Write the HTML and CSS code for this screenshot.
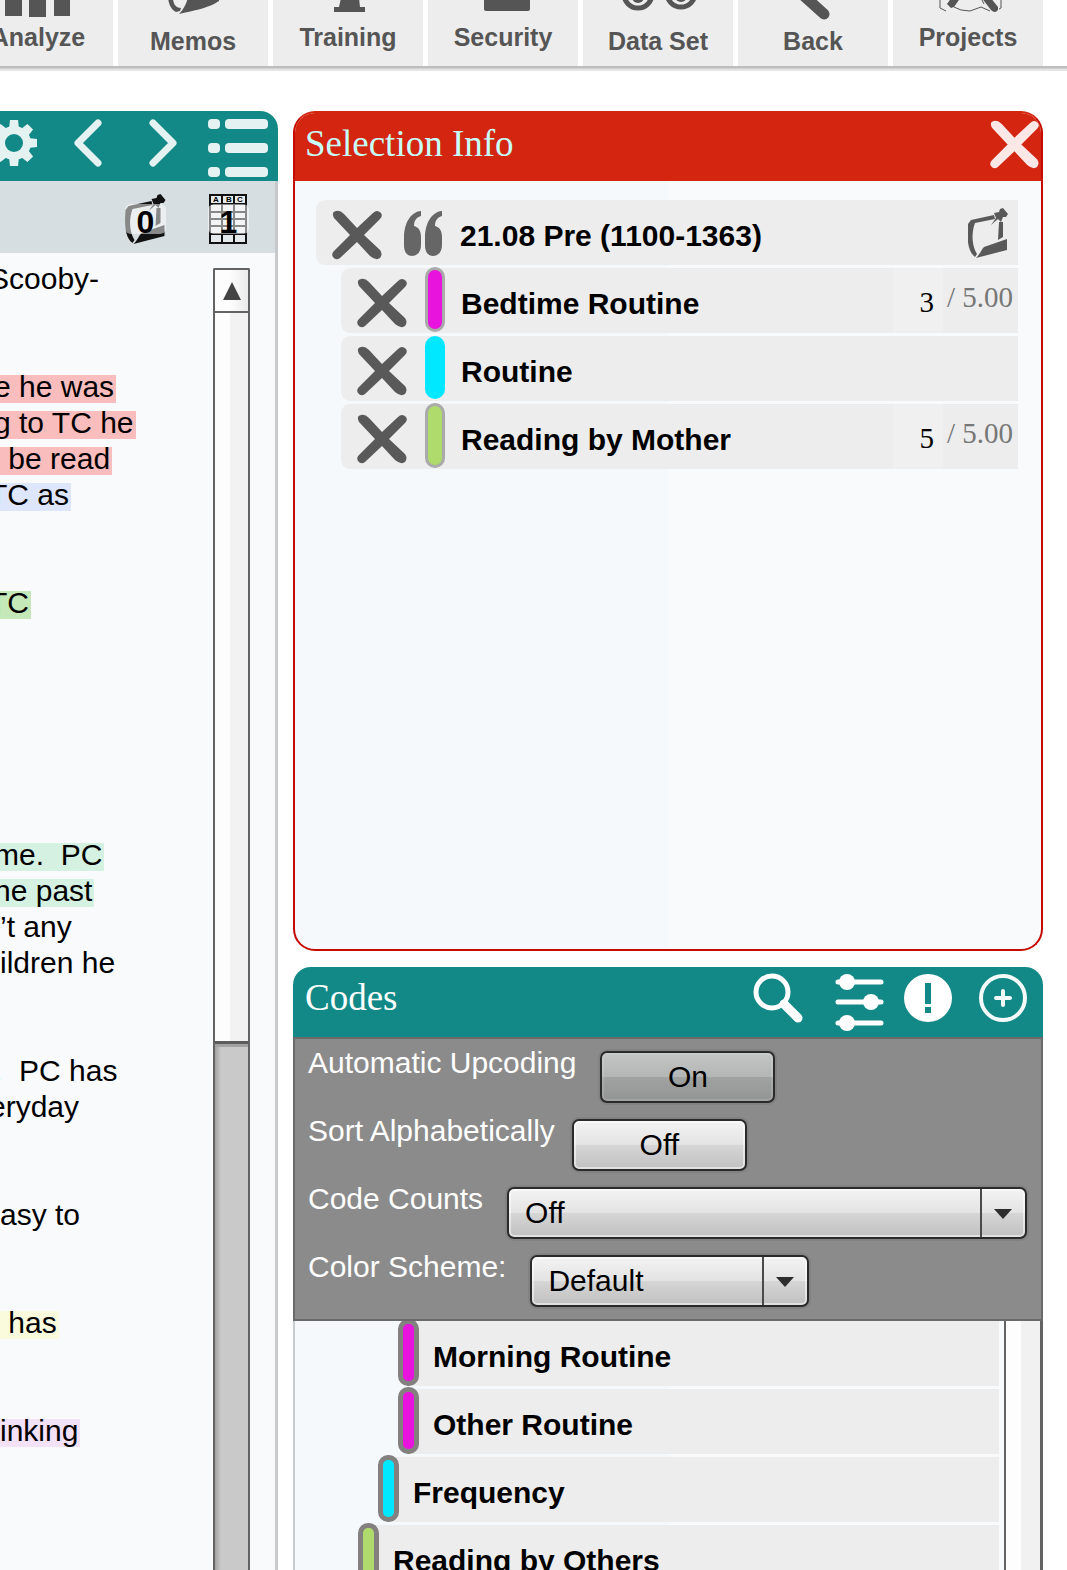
FILE: index.html
```html
<!DOCTYPE html>
<html lang="en">
<head>
<meta charset="utf-8">
<meta name="viewport" content="width=device-width, initial-scale=1">
<title>Selection Info</title>
<link rel="stylesheet" href="styles.css">
</head>
<body>
<svg class="symbols" aria-hidden="true">
  <symbol id="cross" viewBox="0 0 50 50"><path d="M2 8Q-1 2 4 1Q8 0 12 4L25 18L41 3Q45-1 49 3Q51 6 48 9L32 25L48 40Q51 44 48 48Q44 51 38 46L25 32L8 48Q4 51 1 47Q-1 44 2 41L18 25Z"/></symbol>
  <symbol id="memo" viewBox="0 0 40 50"><path d="M0 16L3 12L26 7L27 11L7 15L6 18C3 29 5 40 9 46L7 49C-1 43-1 29 0 16ZM31 14H35V29L30 32ZM8 50C13 45 13 42 16 39L39 31V42ZM26 5L31 4L32 1L35 0L40 6L38 9H35L33 14L30 11L23 17L28 10Z"/></symbol>
</svg>
<div class="app">
  <nav class="toolbar" aria-label="Main">
    <button class="tool"><svg class="tool-icon" viewBox="0 0 150 22"><path d="M42-4H59V16H42ZM66-4H83V17H66ZM91-4H107V16H91Z"/></svg>Analyze</button>
    <button class="tool"><svg class="tool-icon deep" viewBox="0 0 150 26"><path d="M50-2C51 6 54 10 58 12L62 11L63 8C58 8 55 4 55-2ZM70-2C68 4 66 9 61 14C75 11 88 8 96 4L101 1V-2Z"/></svg>Memos</button>
    <button class="tool"><svg class="tool-icon" viewBox="0 0 150 22"><path d="M68-2H86L87 7H92V12H61V7H66Z"/></svg>Training</button>
    <button class="tool"><svg class="tool-icon" viewBox="0 0 150 22"><path d="M56-2H102V9Q102 11 100 11H58Q56 11 56 9Z"/></svg>Security</button>
    <button class="tool"><svg class="tool-icon deep" viewBox="0 0 150 26"><g class="lines"><circle cx="55" cy="-6" r="14"/><circle cx="98" cy="-7" r="14"/></g><circle cx="55" cy="-3" r="6"/><circle cx="98" cy="-4" r="6"/></svg>Data Set</button>
    <button class="tool"><svg class="tool-icon deep" viewBox="0 0 150 26"><path class="handle" d="M66-4L86 14"/></svg>Back</button>
    <button class="tool"><svg class="tool-icon" viewBox="0 0 150 22"><path d="M59-3L54 4L58 8L61 7L68-3ZM88-3L98 10Q102 14 105 10V7L97-3Z"/><path class="thin" d="M47-2V8L53 11M61 7L68 10L77 11L88 7L97 11M88-2L91 4M108-2V8L106 9"/></svg>Projects</button>
  </nav>
  <main class="workspace">
    <section class="panel document">
      <header class="panel-head doc-head">
        <button class="head-button" aria-label="Settings"><svg width="46" height="48" viewBox="-24 -24 46 48"><g class="pale"><circle r="17"/><g><path id="tooth" d="M-5-14L-4-23H4L5-14Z"/><use href="#tooth" transform="rotate(45)"/><use href="#tooth" transform="rotate(90)"/><use href="#tooth" transform="rotate(135)"/><use href="#tooth" transform="rotate(180)"/><use href="#tooth" transform="rotate(225)"/><use href="#tooth" transform="rotate(270)"/><use href="#tooth" transform="rotate(315)"/></g></g><circle class="hole" r="9"/></svg></button>
        <button class="head-button" aria-label="Previous"><svg width="28" height="48" viewBox="0 0 28 48"><path class="chevron" d="M24 4L4 24L24 44"/></svg></button>
        <button class="head-button" aria-label="Next"><svg width="28" height="48" viewBox="0 0 28 48"><path class="chevron" d="M4 4L24 24L4 44"/></svg></button>
        <button class="head-button" aria-label="Document list"><svg width="60" height="58" viewBox="0 0 60 58"><g class="pale"><rect width="12" height="10" rx="4"/><rect x="17" width="43" height="10" rx="4"/><rect y="24" width="12" height="10" rx="4"/><rect x="17" y="24" width="43" height="10" rx="4"/><rect y="48" width="12" height="10" rx="4"/><rect x="17" y="48" width="43" height="10" rx="4"/></g></svg></button>
      </header>
      <div class="doc-bar">
        <button class="counter" aria-label="Memos: 0"><svg class="ink" width="41" height="50"><use href="#memo"/></svg><span class="count">0</span></button>
        <button class="counter" aria-label="Descriptors: 1"><svg width="40" height="50" viewBox="0 0 40 50"><path class="grid-lines" d="M2 1H38V49H2ZM2 10H38M14 1V49M26 1V49M2 18H38M2 25H38M2 32H38M2 40H38"/><g class="grid-text"><text x="5" y="8">A</text><text x="18" y="8">B</text><text x="29" y="8">C</text></g></svg><span class="count">1</span></button>
      </div>
      <div class="doc-body">
        <div class="doc-text">
          <p class="clip-wide">Scooby-</p>
          <p></p>
          <p></p>
          <p class="clip"><mark class="rose">e he was</mark></p>
          <p class="clip"><mark class="rose">g to TC he</mark></p>
          <p><mark class="rose"> be read</mark></p>
          <p class="clip-wide"><mark class="blue">TC as</mark></p>
          <p></p>
          <p></p>
          <p class="clip-wide"><mark class="green">TC</mark></p>
          <p></p>
          <p></p>
          <p></p>
          <p></p>
          <p></p>
          <p></p>
          <p class="clip"><mark class="mint">me.  PC</mark></p>
          <p class="clip"><mark class="mint">he past</mark></p>
          <p>’t any</p>
          <p>ildren he</p>
          <p></p>
          <p></p>
          <p class="clip">.  PC has</p>
          <p class="clip-wide">eryday</p>
          <p></p>
          <p></p>
          <p>asy to</p>
          <p></p>
          <p></p>
          <p><mark class="yellow"> has</mark></p>
          <p></p>
          <p></p>
          <p><mark class="violet">inking</mark></p>
        </div>
        <div class="scrollbar doc-scroll">
          <button class="scroll-up" aria-label="Scroll up"><svg width="18" height="18" viewBox="0 0 18 18"><path d="M9 0L18 18H0Z"/></svg></button>
          <div class="thumb"></div>
        </div>
      </div>
    </section>
    <div class="side">
      <section class="panel selection">
        <header class="panel-head">
          <h2>Selection Info</h2>
          <button class="close" aria-label="Close"><svg width="49" height="49"><use href="#cross"/></svg></button>
        </header>
        <ul class="excerpts">
          <li class="row">
            <button class="remove" aria-label="Remove excerpt"><svg width="50" height="50"><use href="#cross"/></svg></button>
            <svg class="quote" width="38" height="45" viewBox="0 0 38 45"><path id="mark" d="M17 0C6 1 0 13 0 27V34C0 41 3 45 8 45C13 45 17 41 17 34V26C17 19 14 16 10 15C10 9 13 6 17 5Z"/><use href="#mark" x="21"/></svg>
            <span class="name">21.08 Pre (1100-1363)</span>
            <button class="memo" aria-label="Memo"><svg width="40" height="50"><use href="#memo"/></svg></button>
          </li>
          <li class="row nested">
            <button class="remove" aria-label="Remove code"><svg width="50" height="50"><use href="#cross"/></svg></button>
            <span class="swatch magenta"></span>
            <label class="name" for="w1">Bedtime Routine</label>
            <input class="weight" id="w1" value="3"><span class="limit">/ 5.00</span>
          </li>
          <li class="row nested">
            <button class="remove" aria-label="Remove code"><svg width="50" height="50"><use href="#cross"/></svg></button>
            <span class="swatch plain cyan"></span>
            <span class="name">Routine</span>
          </li>
          <li class="row nested">
            <button class="remove" aria-label="Remove code"><svg width="50" height="50"><use href="#cross"/></svg></button>
            <span class="swatch lime"></span>
            <label class="name" for="w2">Reading by Mother</label>
            <input class="weight" id="w2" value="5"><span class="limit">/ 5.00</span>
          </li>
        </ul>
      </section>
      <section class="panel codes">
        <header class="panel-head">
          <h2>Codes</h2>
          <div class="code-tools">
            <button aria-label="Search"><svg width="49" height="58" viewBox="0 0 49 58"><circle class="ring lens" cx="18" cy="18" r="16"/><path class="grip" d="M30 30L44 44"/></svg></button>
            <button aria-label="Options"><svg width="49" height="58" viewBox="0 0 49 58"><path class="rails" d="M3 8H46M3 28H46M3 49H46"/><circle cx="12" cy="8" r="8"/><circle cx="36" cy="28" r="8"/><circle cx="12" cy="49" r="8"/></svg></button>
            <button aria-label="Alerts"><svg width="49" height="58" viewBox="0 0 49 58"><circle cx="24" cy="24" r="24"/><path class="hole" d="M21 9H27V30H21ZM21 33H27V39H21Z"/></svg></button>
            <button aria-label="Add code"><svg width="49" height="58" viewBox="0 0 49 58"><circle class="ring" cx="24" cy="24" r="22"/><path class="ring" d="M17 24H31M24 17V31"/></svg></button>
          </div>
        </header>
        <form class="options">
          <div class="option"><label for="upcoding">Automatic Upcoding</label><button type="button" id="upcoding" class="toggle pressed">On</button></div>
          <div class="option tight"><label for="sorting">Sort Alphabetically</label><button type="button" id="sorting" class="toggle">Off</button></div>
          <div class="option"><label for="counts">Code Counts</label><div class="dropdown wide"><select id="counts"><option>Off</option></select></div></div>
          <div class="option"><label for="scheme">Color Scheme:</label><div class="dropdown"><select id="scheme"><option>Default</option></select></div></div>
        </form>
        <div class="code-body">
          <ul class="code-list">
            <li class="code level-3"><span class="swatch magenta"></span><span class="name">Morning Routine</span></li>
            <li class="code level-3"><span class="swatch magenta"></span><span class="name">Other Routine</span></li>
            <li class="code level-2"><span class="swatch cyan"></span><span class="name">Frequency</span></li>
            <li class="code level-1"><span class="swatch lime"></span><span class="name">Reading by Others</span></li>
          </ul>
          <div class="scrollbar"></div>
        </div>
      </section>
    </div>
  </main>
</div>
</body>
</html>
```
FILE: styles.css
```css
* { box-sizing: border-box; }

body {
  margin: 0;
  background: #fff;
  color: #000;
  font: 30px/36px "Liberation Sans", Arial, sans-serif;
}

h2, p, ul { margin: 0; padding: 0; font-weight: 400; }
ul { list-style: none; }
svg { display: block; flex: none; overflow: visible; }

button, input, select {
  margin: 0;
  padding: 0;
  border: 0;
  border-radius: 0;
  background: none;
  color: inherit;
  font: inherit;
}

.symbols { position: absolute; width: 0; height: 0; }

.app {
  display: flex;
  flex-direction: column;
  height: 100vh;
  overflow: hidden;
}

/* Top toolbar */
.toolbar {
  display: flex;
  flex: none;
  justify-content: flex-end;
  gap: 5px;
  padding-right: 24px;
  border-bottom: 2px solid #bebebe;
  box-shadow: 0 1px #d0d0d0, 0 3px #e5e5e5;
  overflow-x: clip;
}

.tool {
  flex: none;
  width: 150px;
  height: 66px;
  display: flex;
  flex-direction: column;
  align-items: center;
  background: #ededed;
  color: #555;
  font-weight: 700;
  font-size: 25px;
  line-height: 30px;
}

.tool-icon { width: 150px; height: 22px; fill: #555; overflow: hidden; }
.tool-icon.deep { height: 26px; }
.lines { fill: none; stroke: #555; stroke-width: 5; }
.handle { stroke: #555; stroke-width: 11; stroke-linecap: round; }
.thin { fill: none; stroke: #555; stroke-width: 1; }

/* Panels */
.workspace {
  display: flex;
  flex: 1;
  gap: 15px;
  min-height: 0;
  padding: 43px 24px 0 0;
}

.side {
  display: flex;
  flex: 1;
  flex-direction: column;
  gap: 16px;
  min-width: 0;
}

.panel {
  display: flex;
  flex-direction: column;
  min-height: 0;
  overflow: hidden;
}

.panel-head {
  display: flex;
  flex: none;
  justify-content: space-between;
  height: 70px;
  background: #128987;
  color: #fff;
}

.panel-head h2 {
  padding: 10px 0 0 12px;
  font-family: "Liberation Serif", "Times New Roman", serif;
  font-size: 37px;
  line-height: 42px;
}

/* Document */
.document { width: 278px; border-radius: 0 18px 0 0; }
.doc-head { justify-content: flex-end; gap: 15px; padding: 8px 10px 0 0; }
.head-button { display: flex; flex: none; justify-content: center; width: 60px; height: 58px; }
.pale { fill: #e4f2f2; }
.hole { fill: #128987; }
.chevron { fill: none; stroke: #e4f2f2; stroke-width: 7; stroke-linecap: round; stroke-linejoin: round; }

.doc-bar {
  display: flex;
  flex: none;
  justify-content: flex-end;
  gap: 42px;
  height: 72px;
  padding: 13px 26px 0 0;
  background: #d7dee1;
  border-right: 3px solid #c5c9cb;
}

.counter { position: relative; width: 41px; height: 50px; }
.ink { fill: #111; }
.grid-lines { fill: #fff5; stroke: #111; stroke-width: 2; }
.grid-text { font: 700 8px "Liberation Sans", Arial, sans-serif; }

.count {
  position: absolute;
  inset: 10px 0;
  border-radius: 6px;
  background: rgba(255, 255, 255, 0.5);
  font-weight: 700;
  font-size: 32px;
  line-height: 36px;
}

.doc-body {
  display: flex;
  flex: 1;
  min-height: 0;
  background: #f8fafc;
  border-right: 3px solid #c9cacc;
}

.doc-text { flex: 1; padding-top: 8px; min-width: 0; }
.doc-text p { height: 36px; white-space: pre; }
.doc-text .clip { margin-left: -6px; }
.doc-text .clip-wide { margin-left: -11px; }

mark {
  padding-right: 2px;
  color: inherit;
  background: linear-gradient(transparent 5px, var(--tint) 5px);
}

.rose { --tint: #fabdbd; }
.blue { --tint: #dde6fb; }
.green { --tint: #c5e8b9; }
.mint { --tint: #d4f1e2; }
.yellow { --tint: #fafbdd; }
.violet { --tint: #f3e1f8; }

.scrollbar {
  width: 37px;
  border: solid #636363;
  border-width: 0 2px;
  background: linear-gradient(90deg, #fdfdfd 45%, #f1f1f1 45%);
}

.doc-scroll {
  display: flex;
  flex-direction: column;
  margin: 15px 25px 0 0;
  border-top-width: 2px;
  border-radius: 2px 2px 0 0;
  background: linear-gradient(90deg, #a2a2a2, #c9c9c9 6px);
}

.scroll-up {
  display: flex;
  flex: none;
  align-items: center;
  justify-content: center;
  height: 43px;
  border-bottom: 2px solid #636363;
  background: linear-gradient(90deg, #fdfdfd 45%, #ebebeb);
  fill: #444;
}

.thumb {
  flex: 0 1 731px;
  border-bottom: 3px solid #5c5c5c;
  background: linear-gradient(90deg, #fdfdfd 45%, #f2f2f2 45%);
  box-shadow: 0 3px #a2a2a2;
}

/* Selection info */
.selection {
  flex: 838 1 0;
  border: 2px solid #c60b02;
  border-top-color: #d32510;
  border-radius: 22px;
  background: linear-gradient(90deg, #f5f9fc 50%, #f8fafc 50%);
}

.selection .panel-head {
  height: 68px;
  background: #d32510;
  color: #c9fffb;
}

.selection h2 { padding-left: 10px; }
.close { padding: 7px 2px 0 0; height: 56px; fill: #fbe8e6; }

.excerpts {
  display: flex;
  flex-direction: column;
  gap: 3px;
  padding: 19px 23px 0 21px;
}

.row {
  display: flex;
  height: 65px;
  padding-left: 16px;
  border-radius: 9px 0 0 9px;
  background: #ededed;
}

.nested { margin-left: 25px; }
.remove { flex: none; width: 50px; padding-top: 10px; height: 60px; fill: #595959; }
.quote { margin: 11px 18px 0 22px; fill: #666; }
.name { flex: 1; padding-top: 13px; font-weight: 700; line-height: 45px; white-space: nowrap; }
.memo { height: 58px; padding: 8px 10px 0 0; fill: #595959; }

.swatch {
  flex: none;
  width: 20px;
  height: 65px;
  margin: -1px 16px 0 18px;
  border: 3px solid #aaa;
  border-radius: 10px;
}

.plain { height: 63px; margin-top: 0; border: 0; }
.magenta { background: #e813dc; }
.cyan { background: #00e8ff; }
.lime { background: #aedb6b; }

.weight, .limit {
  font-family: "Liberation Serif", "Times New Roman", serif;
  font-size: 29px;
}

.weight { width: 50px; padding: 2px 9px 0 0; background: #f0f0f0; text-align: right; }
.limit { width: 75px; padding: 11px 0 0 4px; color: #777; white-space: nowrap; }

/* Codes */
.codes { flex: 605 1 0; border-radius: 18px 18px 0 0; }
.code-tools { display: flex; gap: 26px; padding: 7px 15px 0 0; }
.code-tools button { height: 58px; fill: #fff; }
.code-tools button:nth-child(2) { margin: 0 -6px 0 6px; }
.ring { fill: none; stroke: #f4fafa; stroke-width: 4; stroke-linecap: round; }
.lens { stroke: #fff; stroke-width: 5; }
.grip { stroke: #fff; stroke-width: 9; stroke-linecap: round; }
.rails { stroke: #fff; stroke-width: 5; stroke-linecap: round; }

.options {
  display: flex;
  flex: none;
  flex-direction: column;
  gap: 16px;
  padding: 12px 14px 12px 13px;
  border: 2px solid #6a6a6a;
  background: #8b8b8b;
  color: #fff;
}

.option { display: flex; align-items: flex-start; gap: 24px; height: 52px; }
.option label { line-height: 24px; white-space: nowrap; }
.tight { gap: 17px; }

.toggle, .dropdown {
  height: 52px;
  border: 2px solid #2a2a2a;
  border-radius: 7px;
  background: linear-gradient(#f3f3f3, #e3e3e3 50%, #d6d6d6 50%, #c0c0c0);
  box-shadow: inset 0 0 0 2px rgba(255, 255, 255, 0.5), 0 0 0 2px rgba(0, 0, 0, 0.06);
  color: #000;
}

.toggle { width: 175px; }

.pressed {
  background: linear-gradient(#c3c6c5, #b4b6b5 50%, #a0a3a2 50%, #939594);
  box-shadow: inset 0 0 0 2px rgba(255, 255, 255, 0.12), 0 0 0 2px rgba(0, 0, 0, 0.06);
}

.dropdown { position: relative; width: 279px; }
.wide { flex: 1; }

.dropdown select {
  appearance: none;
  width: 100%;
  height: 48px;
  padding-left: 16px;
  background: linear-gradient(#4a4a4a, #4a4a4a) right 43px top / 2px 100% no-repeat;
}

.dropdown::after {
  content: "";
  position: absolute;
  right: 13px;
  top: 20px;
  border: solid transparent;
  border-width: 10px 9px 0;
  border-top-color: #2d2d2d;
  pointer-events: none;
}

.code-body {
  display: flex;
  flex: 1;
  min-height: 0;
  border-left: 2px solid #c9cccd;
  background: linear-gradient(90deg, #f5f9fc 50%, #f8fafc 50%);
}

.code-list {
  display: flex;
  flex: 1;
  flex-direction: column;
  gap: 3px;
  padding-right: 5px;
  overflow: hidden;
}

.code {
  display: flex;
  flex: none;
  height: 65px;
  background: #ededed;
}

.level-1 { margin-left: 73px; }
.level-2 { margin-left: 93px; }
.level-3 { margin-left: 113px; }

.code .swatch {
  width: 21px;
  height: 67px;
  margin: -2px 14px 0 -10px;
  border: 5px solid #848080;
}

.code-body .scrollbar { width: 39px; border-width: 0 3px 0 2px; }
```
